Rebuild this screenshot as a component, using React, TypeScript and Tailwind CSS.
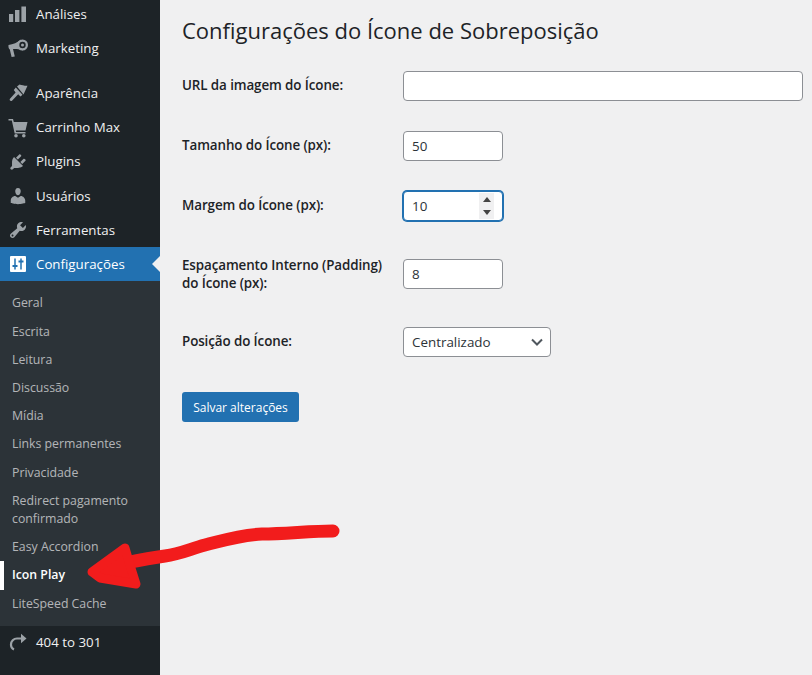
import React from "react";

const Ic = ({ children }: { children: React.ReactNode }) => (
  <svg width="20" height="20" viewBox="0 0 20 20" fill="currentColor">{children}</svg>
);
const Bars = () => <Ic><path d="M1 10h4.2v8H1zM7 6h4.4v12H7zM13.4 2.500H18V18h-4.600z" /></Ic>;
const Megaphone = () => (
  <Ic>
    <path d="M0.500 7C5 6.500 9.500 4.500 13 1.500L15 12.500C11 11 7.500 10.800 5 11L6.800 18.500 3.600 19 1.800 11.500C0.600 11 0.300 8.500 0.500 7Z" />
    <circle cx="14.500" cy="7" r="5.500" />
    <circle cx="14.500" cy="7" r="3.200" fill="#1d2327" />
    <circle cx="14.500" cy="7" r="1.500" />
  </Ic>
);
const Brush = () => (
  <Ic>
    <path d="M9 3.500 11.500 1.500C14 2 16.500 3 19.500 2.800L15.500 11.500Z" />
    <path d="M7.800 4.500 14.500 11.800 12.500 13.500 10.200 11.300 4 17.800C2.800 18.800 0.800 17.300 2 15.800L7.600 9.500 5.800 7Z" />
  </Ic>
);
const Cart = () => (
  <Ic>
    <path d="M0.500 1H5L5.800 4H19.500L17.500 12.500H7.700L8.100 14H17.500V15.600H6.700L3.800 2.600H0.500Z" />
    <circle cx="8" cy="17.800" r="1.800" />
    <circle cx="15.800" cy="17.800" r="1.800" />
  </Ic>
);
const Plug = () => (
  <Ic><path d="M13.110 4.360L9.870 7.600 8 5.730l3.240-3.240c.35-.34 1.050-.2 1.560.32.52.51.66 1.210.31 1.550zm-8 1.770l.91-1.120 9.010 9.010-1.190.84c-.71.71-2.630 1.160-3.820 1.160H6.140L4.900 17.260c-.59.59-1.540.59-2.120 0-.59-.58-.59-1.530 0-2.120l1.240-1.240v-3.880c0-1.130.4-3.190 1.090-3.890zm7.260 3.970l3.240-3.240c.34-.35 1.040-.21 1.550.31.52.51.66 1.210.31 1.550l-3.240 3.250z" /></Ic>
);
const User = () => (
  <Ic><path d="M10 9.250c-2.270 0-2.730-3.440-2.730-3.440C7 4.020 7.820 2 9.970 2c2.160 0 2.980 2.020 2.710 3.810 0 0-.41 3.440-2.680 3.440zm0 2.570L12.720 10c2.390 0 4.520 2.330 4.520 4.530v2.490s-3.650 1.130-7.240 1.130c-3.650 0-7.240-1.130-7.240-1.130v-2.490c0-2.250 1.940-4.480 4.470-4.480z" /></Ic>
);
const Wrench = () => (
  <Ic><path d="M16.680 9.770c-1.340 1.340-3.300 1.670-4.950.99l-5.410 6.520c-.99.99-2.590.99-3.580 0s-.99-2.590 0-3.570l6.520-5.420c-.68-1.650-.35-3.610.99-4.950 1.280-1.280 3.120-1.620 4.720-1.060l-2.890 2.890 2.820 2.820 2.860-2.870c.53 1.580.18 3.390-1.080 4.650zM3.810 16.210c.4.39 1.040.39 1.430 0 .4-.4.4-1.040 0-1.430-.39-.4-1.030-.4-1.430 0-.39.39-.39 1.030 0 1.430z" /></Ic>
);
const Sliders = () => (
  <svg width="16" height="16" viewBox="0 0 16 16">
    <rect width="16" height="16" rx="1" fill="#fff" />
    <path d="M5 2.500v11M11 2.500v11" stroke="#2271b1" strokeWidth="1.500" fill="none" />
    <path d="M2.500 10h5M8.500 5.500h5" stroke="#2271b1" strokeWidth="2.200" fill="none" />
  </svg>
);
const Redirect = () => (
  <svg width="20" height="20" viewBox="0 0 20 20" fill="none" stroke="currentColor" strokeWidth="2.200"><path d="M14 5.500H9a6 6 0 0 0-6 6v.5a5 5 0 0 0 3 4.500" /><path d="M13 0.800 18.500 5.500 13 10.200z" fill="currentColor" stroke="none" /></svg>
);

const top1 = [
  { t: "Análises", i: <Bars /> },
  { t: "Marketing", i: <Megaphone /> },
];
const top2 = [
  { t: "Aparência", i: <Brush /> },
  { t: "Carrinho Max", i: <Cart /> },
  { t: "Plugins", i: <Plug /> },
  { t: "Usuários", i: <User /> },
  { t: "Ferramentas", i: <Wrench /> },
];
const sub = ["Geral", "Escrita", "Leitura", "Discussão", "Mídia", "Links permanentes", "Privacidade", "Redirect pagamento confirmado", "Easy Accordion", "Icon Play", "LiteSpeed Cache"];

function MenuItem({ t, i }: { t: string; i: React.ReactNode }) {
  return (
    <div className="flex h-[34.2px] items-center text-[13.3px] text-[#f0f0f1]">
      <span className="flex w-9 shrink-0 items-center justify-center text-[#9ca2a7]">{i}</span>
      <span className="pt-px">{t}</span>
    </div>
  );
}

const inputCls = "block h-[30px] rounded-[4px] border border-[#8c8f94] bg-white px-2 text-[13.4px] text-[#2c3338] outline-none";
const labelCls = "py-5 pr-[15px] text-[13.4px] leading-[18.2px] font-semibold tracking-[-0.1px] text-[#1d2327]";
const cellCls = "self-center py-[15px]";

export default function App() {
  return (
    <div className="relative flex h-[675px] w-[812px] overflow-hidden bg-[#f0f0f1] font-['Open_Sans','Liberation_Sans',sans-serif]">
      <aside className="h-full w-40 shrink-0 bg-[#1d2327] pt-[2px] [&>*:first-child]:-mt-[5px]">
        {top1.map((m) => <MenuItem key={m.t} {...m} />)}
        <div className="h-[11px]" />
        {top2.map((m) => <MenuItem key={m.t} {...m} />)}
        <div className="relative flex h-[34px] items-center bg-[#2271b1] text-[13.3px] text-white">
          <span className="flex w-9 shrink-0 items-center justify-center"><Sliders /></span>
          <span className="pt-px">Configurações</span>
          <span className="absolute right-0 top-[9px] h-0 w-0 border-y-[8px] border-r-[8px] border-y-transparent border-r-[#f0f0f1]" />
        </div>
        <div className="bg-[#2c3338] pt-[8px] pb-[8px] text-[12.3px] leading-[18.2px]">
          {sub.map((s) =>
            s === "Icon Play" ? (
              <div key={s} className="border-l-4 border-white py-[5px] pr-3 pl-2 font-semibold text-white">{s}</div>
            ) : (
              <div key={s} className="py-[5px] px-3 text-[#f0f0f1]/70">{s}</div>
            )
          )}
        </div>
        <MenuItem t="404 to 301" i={<Redirect />} />
      </aside>
      <main className="flex-1 pl-[22px]">
        <h1 className="mt-[15px] mb-[11px] text-[22px] leading-[30px] font-normal text-[#1d2327]">Configurações do Ícone de Sobreposição</h1>
        <form className="grid grid-cols-[221px_1fr]">
          <label className={labelCls}>URL da imagem do Ícone:</label>
          <div className={cellCls}><input readOnly className={`${inputCls} w-[400px]`} /></div>
          <label className={labelCls}>Tamanho do Ícone (px):</label>
          <div className={cellCls}><input readOnly value="50" className={`${inputCls} w-[100px]`} /></div>
          <label className={labelCls}>Margem do Ícone (px):</label>
          <div className={cellCls}>
            <div className="relative w-[100px]">
              <input readOnly value="10" className={`${inputCls} w-[100px] border-[#2271b1] ring-1 ring-[#2271b1]`} />
              <div className="absolute right-[9px] top-[2px] flex h-[26px] w-[15px] flex-col items-center justify-around bg-[#f0f0f1]">
                <span className="h-0 w-0 border-x-[4px] border-b-[5px] border-x-transparent border-b-[#444]" />
                <span className="h-0 w-0 border-x-[4px] border-t-[5px] border-x-transparent border-t-[#444]" />
              </div>
            </div>
          </div>
          <label className={labelCls}>Espaçamento Interno (Padding) do Ícone (px):</label>
          <div className={cellCls}><input readOnly value="8" className={`${inputCls} w-[100px]`} /></div>
          <label className={labelCls}>Posição do Ícone:</label>
          <div className={cellCls}>
            <div className="relative w-[148px]">
              <select className={`${inputCls} w-[148px] appearance-none`} defaultValue="c"><option value="c">Centralizado</option></select>
              <svg className="pointer-events-none absolute right-[8px] top-[10px]" width="12" height="10" viewBox="0 0 12 10" fill="none" stroke="#50575e" strokeWidth="2"><path d="M1 2.500 6 7.500 11 2.500" /></svg>
            </div>
          </div>
        </form>
        <button type="button" className="mt-5 h-[30px] w-[117px] rounded-[3px] bg-[#2271b1] pt-px text-[12px] font-medium text-white">Salvar alterações</button>
      </main>
      <svg className="pointer-events-none absolute top-0 left-0" width="812" height="675" viewBox="0 0 812 675" fill="none">
        <path d="M333 531C310 531 285 534 262 534C240 535 225 540 205 545C190 549 180 554 165 556C150 558 140 560 125 563" stroke="#f21c1c" strokeWidth="13" strokeLinecap="round" strokeLinejoin="round" />
        <path d="M125 548 92 572 100 578 136 584 130 565Z" fill="#f21c1c" stroke="#f21c1c" strokeWidth="9" strokeLinejoin="round" />
      </svg>
    </div>
  );
}
